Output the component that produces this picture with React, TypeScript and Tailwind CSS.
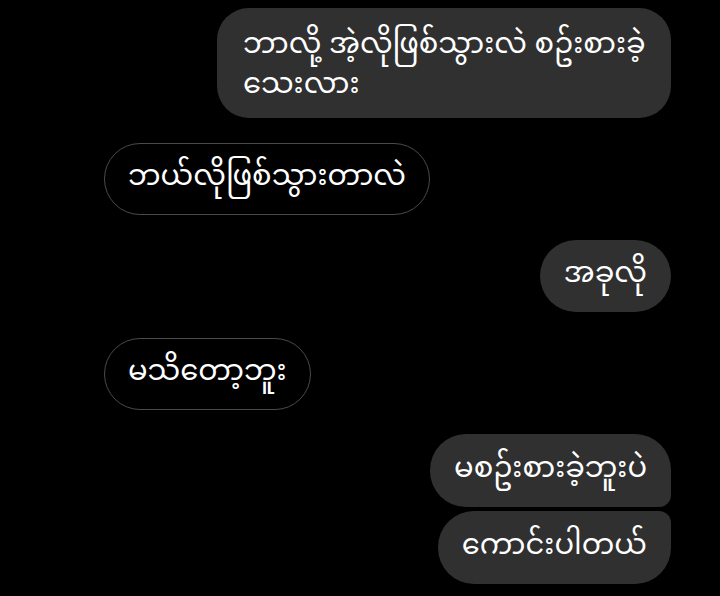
import React from "react";

const font = {
  fontFamily:
    '"Noto Sans Myanmar", "Noto Sans Myanmar UI", Padauk, "Myanmar Text", "Noto Sans", "DejaVu Sans", sans-serif',
};

export default function App() {
  return (
    <div
      className="w-[720px] h-[596px] bg-black text-white overflow-hidden flex flex-col"
      style={font}
    >
      <div className="flex justify-end pr-[49px] pt-[8px]">
        <div className="w-[454px] h-[110px] rounded-[32px] bg-[#303030] pl-[26px] pt-[19px] text-[29px] leading-[40px] whitespace-nowrap">
          ဘာလို့ အဲ့လိုဖြစ်သွားလဲ စဥ်းစားခဲ့
          <br />
          သေးလား
        </div>
      </div>
      <div className="flex justify-start pl-[104px] mt-[25px]">
        <div className="h-[72px] rounded-full border-[1.5px] border-[#4a4a4a] px-[23px] flex items-center text-[29px] whitespace-nowrap">
          ဘယ်လိုဖြစ်သွားတာလဲ
        </div>
      </div>
      <div className="flex justify-end pr-[49px] mt-[25px]">
        <div className="h-[72px] rounded-full bg-[#303030] px-[24px] flex items-center text-[29px] whitespace-nowrap">
          အခုလို
        </div>
      </div>
      <div className="flex justify-start pl-[104px] mt-[26px]">
        <div className="h-[72px] rounded-full border-[1.5px] border-[#4a4a4a] px-[23px] flex items-center text-[29px] whitespace-nowrap">
          မသိတော့ဘူး
        </div>
      </div>
      <div className="flex flex-col items-end pr-[49px] mt-[24px] gap-[4px]">
        <div className="h-[73px] rounded-t-[36px] rounded-bl-[36px] rounded-br-[12px] bg-[#303030] px-[24px] flex items-center text-[29px] whitespace-nowrap">
          မစဥ်းစားခဲ့ဘူးပဲ
        </div>
        <div className="h-[73px] rounded-b-[36px] rounded-tl-[36px] rounded-tr-[12px] bg-[#303030] px-[24px] flex items-center text-[29px] whitespace-nowrap">
          ကောင်းပါတယ်
        </div>
      </div>
    </div>
  );
}
